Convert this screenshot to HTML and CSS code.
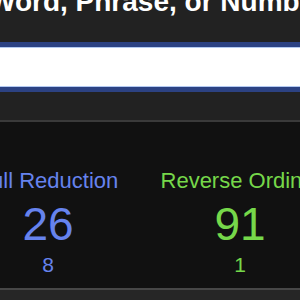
FILE: index.html
```html
<!DOCTYPE html>
<html>
<head>
<meta charset="utf-8">
<link rel="stylesheet" href="styles.css">
</head>
<body>
<div class="page">
  <h1 class="title">Word, Phrase, or Number</h1>
  <div class="search"><input class="search-input" type="text" value=""></div>
  <div class="results">
    <div class="cols">
      <div class="col blue">
        <div class="label">Full Reduction</div>
        <div class="value">26</div>
        <div class="sub">8</div>
      </div>
      <div class="col green">
        <div class="label">Reverse Ordinal</div>
        <div class="value">91</div>
        <div class="sub">1</div>
      </div>
    </div>
  </div>
  <div class="below"></div>
</div>
</body>
</html>
```
FILE: styles.css
```css
html, body {
  margin: 0;
  padding: 0;
  background: #222222;
  overflow: hidden;
}
.page {
  width: 300px;
  height: 300px;
  overflow: hidden;
  font-family: "Liberation Sans", Arial, sans-serif;
}
.title {
  margin: -12px 0 0 -11px;
  font-size: 28px;
  line-height: 28px;
  font-weight: bold;
  color: #ffffff;
  white-space: nowrap;
}
.search {
  margin: 26px -10px 0 -10px;
}
.search-input {
  display: block;
  box-sizing: border-box;
  width: 100%;
  height: 50px;
  margin: 0;
  padding: 0;
  border: 5px solid #2c4283;
  box-shadow: inset 0 0 0 1px #b3c9f2;
  background: #ffffff;
  outline: none;
}
.results {
  margin-top: 28px;
  background: #111111;
  border-top: 2px solid #3a3a3a;
  border-bottom: 2px solid #474747;
  padding: 46px 0 13px 0;
}
.cols {
  display: flex;
  margin-left: -48px;
}
.col {
  flex: none;
  width: 192px;
  text-align: center;
  white-space: nowrap;
}
.label {
  font-size: 22px;
  line-height: 25px;
}
.value {
  margin-top: 9px;
  font-size: 46px;
  line-height: 45px;
}
.sub {
  margin-top: 7px;
  font-size: 21px;
  line-height: 21px;
}
.blue { color: #6683ee; }
.green { color: #76d84a; }
.below {
  height: 20px;
  background: #262626;
}
```
